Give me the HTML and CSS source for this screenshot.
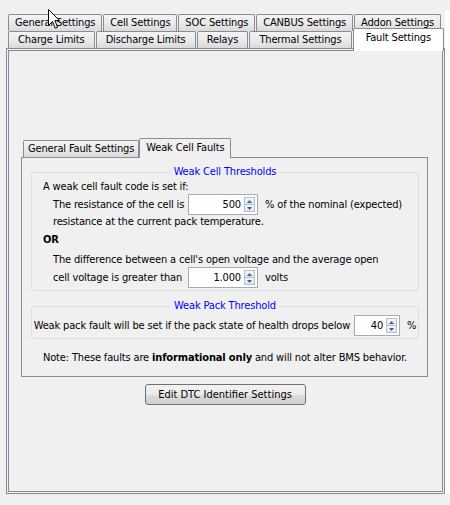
FILE: index.html
```html
<!DOCTYPE html>
<html>
<head>
<meta charset="utf-8">
<link rel="stylesheet" href="styles.css">
</head>
<body>
<div class="screen">
  <div class="main">
    <div class="tabrow row-back">
      <div class="tab">General Settings</div>
      <div class="tab">Cell Settings</div>
      <div class="tab">SOC Settings</div>
      <div class="tab">CANBUS Settings</div>
      <div class="tab">Addon Settings</div>
    </div>
    <div class="tabrow row-front">
      <div class="tab">Charge Limits</div>
      <div class="tab">Discharge Limits</div>
      <div class="tab">Relays</div>
      <div class="tab">Thermal Settings</div>
      <div class="tab tab-selected">Fault Settings</div>
    </div>
    <div class="panel">
      <div class="itabs">
        <div class="itab">General Fault Settings</div>
        <div class="itab itab-selected">Weak Cell Faults</div>
      </div>
      <div class="ipanel">
        <fieldset class="group group-cell">
          <legend>Weak Cell Thresholds</legend>
          <div class="line first">A weak cell fault code is set if:</div>
          <div class="spin-row indent">
            <span class="lbl">The resistance of the cell is</span>
            <span class="spinner">
              <span class="val">500</span>
              <span class="arrows">
                <span class="arr"><svg width="5" height="3" viewBox="0 0 5 3"><path d="M2.5 0L5 3H0Z" fill="#4d5f7c"/></svg></span>
                <span class="arr"><svg width="5" height="3" viewBox="0 0 5 3"><path d="M0 0H5L2.5 3Z" fill="#4d5f7c"/></svg></span>
              </span>
            </span>
            <span class="unit">% of the nominal (expected)</span>
          </div>
          <div class="line indent">resistance at the current pack temperature.</div>
          <div class="line or">OR</div>
          <div class="line indent diff">The difference between a cell's open voltage and the average open</div>
          <div class="spin-row indent">
            <span class="lbl">cell voltage is greater than</span>
            <span class="spinner">
              <span class="val">1.000</span>
              <span class="arrows">
                <span class="arr"><svg width="5" height="3" viewBox="0 0 5 3"><path d="M2.5 0L5 3H0Z" fill="#4d5f7c"/></svg></span>
                <span class="arr"><svg width="5" height="3" viewBox="0 0 5 3"><path d="M0 0H5L2.5 3Z" fill="#4d5f7c"/></svg></span>
              </span>
            </span>
            <span class="unit">volts</span>
          </div>
        </fieldset>
        <fieldset class="group group-pack">
          <legend>Weak Pack Threshold</legend>
          <div class="pack-row">
            <span class="pack-lbl">Weak pack fault will be set if the pack state of health drops below</span>
            <span class="spinner spinner-small">
              <span class="val">40</span>
              <span class="arrows">
                <span class="arr"><svg width="5" height="3" viewBox="0 0 5 3"><path d="M2.5 0L5 3H0Z" fill="#4d5f7c"/></svg></span>
                <span class="arr"><svg width="5" height="3" viewBox="0 0 5 3"><path d="M0 0H5L2.5 3Z" fill="#4d5f7c"/></svg></span>
              </span>
            </span>
            <span class="unit pct">%</span>
          </div>
        </fieldset>
        <p class="note">Note: These faults are <b>informational only</b> and will not alter BMS behavior.</p>
      </div>
      <div class="btn-row"><button class="btn">Edit DTC Identifier Settings</button></div>
    </div>
  </div>
  <div class="edge"></div>
  <svg class="cursor" width="13" height="20" viewBox="0 0 13 20"><path d="M0.5 0.5V16.5L4.5 12.5L7.3 19.2L9.6 18.2L6.9 11.6H11.5Z" fill="#fff" stroke="#000" stroke-width="1" stroke-linejoin="miter"/></svg>
</div>
</body>
</html>
```
FILE: styles.css
```css
body {
  margin: 0;
  background: #f0f0f0;
  font-family: "DejaVu Sans Condensed", "Liberation Sans", sans-serif;
  font-size: 11px;
  letter-spacing: -0.15px;
  color: #000;
}

.screen {
  position: relative;
  width: 450px;
  height: 505px;
  display: flex;
  overflow: hidden;
}

.main {
  width: 445px;
  padding-top: 14px;
  box-sizing: border-box;
}

.edge {
  width: 5px;
  height: 484px;
  margin-top: 10px;
  background: #fff;
}

.tabrow {
  display: flex;
  height: 17px;
  gap: 1px;
  margin-left: 8px;
}

.row-back { width: 433px; }

.row-front {
  width: 436px;
  align-items: flex-end;
}

.tab {
  flex: 1 1 auto;
  box-sizing: border-box;
  height: 17px;
  border: 1px solid #898c95;
  border-bottom: none;
  border-radius: 2px 2px 0 0;
  background: linear-gradient(#f4f4f4, #eaeaea 50%, #dadada);
  display: flex;
  align-items: center;
  justify-content: center;
  padding: 0 4px;
  line-height: 14px;
  white-space: nowrap;
}

.tab-selected {
  height: 23px;
  margin-top: -3px;
  margin-bottom: -3px;
  padding: 2px 7px 0;
  background: #fff;
  position: relative;
  z-index: 1;
  align-items: flex-start;
}

.panel {
  margin-left: 6px;
  width: 439px;
  height: 446px;
  box-sizing: border-box;
  border: 3px double #898c95;
  background: #f0f0f0;
}

.itabs {
  display: flex;
  align-items: flex-end;
  height: 17px;
  margin: 89px 0 0 14px;
}

.itab {
  box-sizing: border-box;
  height: 17px;
  border: 1px solid #898c95;
  border-bottom: none;
  border-radius: 2px 2px 0 0;
  background: linear-gradient(#f4f4f4, #eaeaea 50%, #dadada);
  display: flex;
  align-items: center;
  padding: 0 4px;
  line-height: 14px;
  white-space: nowrap;
}

.itab-selected {
  height: 20px;
  margin-bottom: -1px;
  padding: 2px 6px 0;
  background: #f0f0f0;
  position: relative;
  z-index: 1;
  align-items: flex-start;
}

.ipanel {
  margin-left: 12px;
  width: 407px;
  box-sizing: border-box;
  border: 1px solid #898c95;
  padding: 7px 8px 11px 9px;
}

.group {
  margin: 0;
  padding: 0 0 2px;
  border: 1px solid #d5dfe5;
  border-radius: 3px;
  min-width: 0;
}

.group legend {
  margin: 0 auto;
  padding: 0 3px;
  color: #0000ff;
  line-height: 14px;
}

.group-pack { margin-top: 8px; }

.line {
  height: 14px;
  line-height: 14px;
  white-space: nowrap;
  padding-left: 11px;
}

.first { margin-top: 1px; }

.line.indent,
.spin-row.indent { padding-left: 21px; }

.or {
  margin-top: 4px;
  font-weight: bold;
}

.diff { margin-top: 6px; }

.spin-row {
  display: flex;
  align-items: center;
  height: 21px;
  white-space: nowrap;
}

.lbl {
  width: 135px;
  flex: none;
}

.unit { margin-left: 7px; }

.spinner {
  display: inline-flex;
  flex: none;
  box-sizing: border-box;
  width: 70px;
  height: 21px;
  border: 1px solid #a5acb5;
  background: #fff;
}

.spinner-small { width: 46px; }

.val {
  flex: 1;
  text-align: right;
  padding-right: 3px;
  line-height: 19px;
}

.arrows {
  width: 11px;
  margin: 2px 2px 2px 0;
  display: flex;
  flex-direction: column;
}

.arr {
  flex: 1;
  box-sizing: border-box;
  border: 1px solid #b4bfcd;
  background: linear-gradient(#f4f7fb, #dee5ee);
  display: flex;
  align-items: center;
  justify-content: center;
}

.arr + .arr { border-top: none; }

.pack-row {
  display: flex;
  align-items: center;
  justify-content: center;
  height: 21px;
  margin-top: 2px;
  white-space: nowrap;
}

.pack-lbl {
  flex: none;
  margin-right: 4px;
}

.pct { margin-left: 7px; }

.note {
  margin: 12px 0 0;
  height: 14px;
  line-height: 14px;
  text-align: center;
  white-space: nowrap;
}

.btn-row {
  display: flex;
  justify-content: center;
  margin-top: 7px;
  padding-right: 1px;
}

.btn {
  width: 161px;
  height: 21px;
  padding: 0;
  border: 1px solid #707070;
  border-radius: 3px;
  background: linear-gradient(#f2f2f2, #ebebeb 50%, #dddddd 51%, #cfcfcf);
  font: inherit;
  color: #000;
}

.cursor {
  position: absolute;
  left: 48px;
  top: 9px;
}
```
